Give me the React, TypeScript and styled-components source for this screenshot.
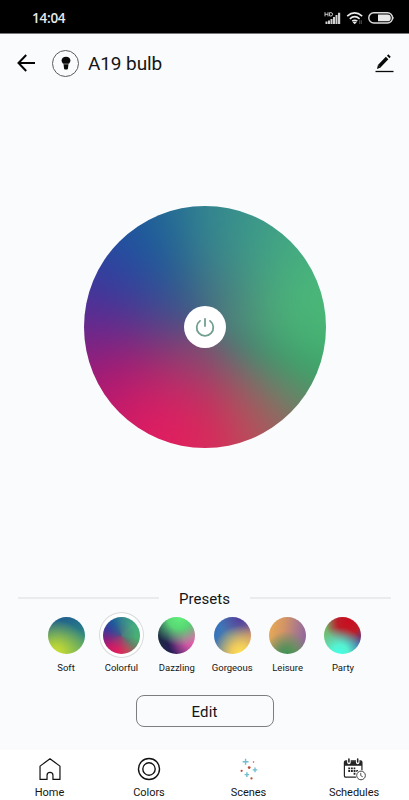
import React from 'react';
import styled, { createGlobalStyle } from 'styled-components';

const GlobalStyle = createGlobalStyle`
  * { box-sizing: border-box; }
  body { margin: 0; background: #f9fbfd; }
  svg { display: block; }
`;

const Screen = styled.div`
  display: flex;
  flex-direction: column;
  width: 409px;
  height: 800px;
  overflow: hidden;
  background: #f9fbfd;
  color: #151515;
  font-family: Roboto, sans-serif;
`;

const StatusBar = styled.div`
  display: flex;
  align-items: center;
  justify-content: space-between;
  height: 34px;
  padding: 2px 14px 0 32px;
  background: #000;
  border-bottom: 1px solid #77777a;
`;

const Clock = styled.span`
  font-family: 'Open Sans', sans-serif;
  font-size: 13.5px;
  font-weight: 600;
  line-height: 18px;
  letter-spacing: -0.25px;
  color: #e9e9e9;
`;

const StatusIcons = styled.div`
  display: flex;
  align-items: center;
  gap: 4px;
`;

const Header = styled.header`
  display: flex;
  align-items: center;
  height: 58px;
  padding: 0 15px 0 17px;
`;

const IconButton = styled.button`
  padding: 0;
  border: 0;
  background: none;
  color: #080808;
`;

const DeviceIcon = styled.div`
  display: grid;
  place-items: center;
  width: 27px;
  height: 27px;
  margin: 0 9px 0 16px;
  border: 1px solid #5b5b5d;
  border-radius: 50%;
`;

const Title = styled.h1`
  flex: 1;
  margin: 2px 0 0;
  font-size: 19px;
  font-weight: 400;
  line-height: 24px;
  letter-spacing: -0.1px;
`;

const Stage = styled.main`
  display: flex;
  justify-content: center;
  height: 497px;
  padding-top: 114px;
`;

const ColorDisc = styled.div`
  position: relative;
  display: grid;
  place-items: center;
  isolation: isolate;
  overflow: hidden;
  width: 242px;
  height: 242px;
  border-radius: 50%;
  &::before {
    content: '';
    position: absolute;
    inset: -30px;
    z-index: -1;
    filter: blur(12px);
    background:
      radial-gradient(circle, rgba(80, 96, 124, 0.8) 0%, rgba(80, 96, 124, 0.55) 16%, rgba(80, 96, 124, 0.16) 34%, transparent 50%),
      conic-gradient(#33838f 0deg, #3c9889 25deg, #45ab80 50deg, #4ab878 75deg, #46b173 97deg,
        #3fa169 112deg, #658568 128deg, #966560 143deg, #b94c5b 158deg, #d2305b 173deg,
        #de215e 191deg, #dc1d62 208deg, #c71b69 226deg, #a71b74 244deg, #7d2384 261deg,
        #562e94 278deg, #3b3a9b 292deg, #284aa0 310deg, #1e5a9b 327deg, #276e94 345deg, #33838f 360deg);
  }
`;

const PowerButton = styled.button`
  display: grid;
  place-items: center;
  width: 42px;
  height: 42px;
  padding: 0;
  border: 0;
  border-radius: 50%;
  background: #fff;
`;

const PresetTitle = styled.div`
  display: flex;
  align-items: center;
  gap: 20px;
  height: 20px;
  padding: 0 18px;
  font-size: 15px;
  letter-spacing: 0.02px;
  line-height: 20px;
  &::before, &::after {
    content: '';
    flex: 1;
    height: 2px;
    margin-top: -2px;
    background: #eaebed;
  }
`;

const PresetList = styled.div`
  display: grid;
  grid-template-columns: repeat(6, 55.4px);
  justify-content: center;
  margin-top: 3px;
`;

const Preset = styled.div`
  display: flex;
  flex-direction: column;
  align-items: center;
  font-size: 9.5px;
  line-height: 12px;
  letter-spacing: -0.02px;
`;

const Ring = styled.div<{ $selected?: boolean }>`
  display: grid;
  place-items: center;
  width: 45px;
  height: 46px;
  margin-bottom: 4px;
  border: 1px solid ${p => (p.$selected ? '#d9dadd' : 'transparent')};
  border-radius: 50%;
  background: ${p => (p.$selected ? '#fff' : 'transparent')};
`;

const Swatch = styled.div<{ $fill: string }>`
  width: 37px;
  height: 37px;
  border-radius: 50%;
  background: ${p => p.$fill};
`;

const EditButton = styled.button`
  flex: none;
  align-self: center;
  width: 138px;
  height: 32px;
  margin-top: 21px;
  padding: 2px 0 0;
  border: 1px solid #7d7e80;
  border-radius: 8px;
  background: transparent;
  color: inherit;
  font: 400 15px/20px Roboto, sans-serif;
  letter-spacing: 0.1px;
`;

const TabBar = styled.nav`
  display: flex;
  justify-content: space-between;
  height: 50px;
  margin-top: auto;
  padding: 0 23px 0 22.5px;
  background: #fff;
`;

const Tab = styled.div<{ $width: number }>`
  display: flex;
  flex-direction: column;
  align-items: center;
  width: ${p => p.$width}px;
  padding-top: 7px;
  font-size: 11px;
  line-height: 14px;
  letter-spacing: -0.05px;
  svg { margin-bottom: 5px; }
`;

const SignalIcon = () => (
  <svg width="18" height="14" viewBox="0 0 18 14" fill="#d0d0d0">
    <path d="M1.500 13v-2.500h2V13zM4 13V9.600h2V13zM6.500 13V8h2v5zM9 13V6h2v7zM11.500 13V4h2v9zM14 13V1.800h2.200V13z" />
    <path d="M1 1.200v4.200M4 1.200v4.200M1 3.300h3M5.600 1.600v3.400h1.200q1.800 0 1.800-1.700T6.800 1.600z" fill="none" stroke="#d8d8d8" strokeWidth=".9" />
  </svg>
);

const WifiIcon = () => (
  <svg width="18" height="14" viewBox="0 0 18 14" fill="none" stroke="#ececec" strokeWidth="1.600">
    <path d="M1.200 5.100q7.300-6.300 15 0M3.800 7.800q4.900-4.200 9.800 0M6.200 10.200q2.600-2 5.100 0" />
    <path d="M6.700 11.300q2-1.400 4 0l-2 2z" fill="#ececec" stroke="none" />
    <path d="M13.700 9.200v3.800M15.300 9.200V13" stroke="#888" strokeWidth=".6" />
  </svg>
);

const BatteryIcon = () => (
  <svg width="27" height="12" viewBox="0 0 27 12">
    <rect x=".8" y=".8" width="23.700" height="10.200" rx="5" fill="#000" stroke="#ddd" strokeWidth="1.400" />
    <path d="M10 2.500h9.400a3.400 3.400 0 0 1 0 6.800H10z" fill="#e8e8e8" />
    <path d="M25.200 4.200q1.500 1.700 0 3.400z" fill="#ddd" />
  </svg>
);

const BackIcon = () => (
  <svg width="19" height="18" viewBox="0 0 19 18" fill="none" stroke="#050505" strokeWidth="2">
    <path d="M18 9H1.700M9.200 1 1.500 9l7.700 8" />
  </svg>
);

const BulbIcon = () => (
  <svg width="10" height="14" viewBox="0 0 10 14" fill="#080808">
    <path d="M5 .7c2.700 0 4.400 1.500 4.400 3.800 0 1.400-.7 2.500-1.800 3.300H2.400C1.300 7 .6 5.900.6 4.500.6 2.200 2.300.7 5 .7z" />
    <path d="M2.500 8.300h5L6.900 12.800 6.300 13.500H3.700L3.100 12.800z" />
  </svg>
);

const EditIcon = () => (
  <svg width="19" height="19" viewBox="0 0 19 19">
    <path d="m4.200 12.200 7.900-8.200M13.200 2.900l1.300-1.300" stroke="#080808" strokeWidth="3.500" />
    <path d="m2 15 .9-4 2.800 2.600z" fill="#080808" />
    <path d="M.5 17.500h18" stroke="#080808" strokeWidth="1.300" />
  </svg>
);

const PowerIcon = () => (
  <svg width="20" height="20" viewBox="0 0 20 20" fill="none" stroke="#72a08e" strokeWidth="1.800" strokeLinecap="round">
    <path d="M10 1.800v7.200M5 3.900a8.300 8.300 0 1 0 10 0" />
  </svg>
);

const HomeIcon = () => (
  <svg width="26" height="26" viewBox="0 0 26 26" fill="none" stroke="#111" strokeWidth="1.300" strokeLinejoin="round">
    <path d="M2.200 24.300V9.900L13 2l10.800 7.900v14.400h-7.600v-4.500a3.200 3.200 0 0 0-6.400 0v4.500z" />
  </svg>
);

const ColorsIcon = () => (
  <svg width="26" height="26" viewBox="0 0 26 26" fill="none" stroke="#111" strokeWidth="1.500">
    <circle cx="13" cy="13" r="11.400" />
    <circle cx="13" cy="13" r="6.700" />
  </svg>
);

const ScenesIcon = () => (
  <svg width="26" height="26" viewBox="0 0 26 26">
    <path d="M9.300 2v6.400M6.100 5.200h6.400M19.500 11.500v5M17 14h5M10.700 16.600v5M8.200 19.100h5" stroke="#70bdcf" strokeWidth="1.500" />
    <g fill="#b94a35">
      <circle cx="13.200" cy="11.500" r="1.500" />
      <circle cx="5" cy="15" r="1.200" />
      <circle cx="15.700" cy="23.200" r="1.200" />
      <circle cx="17.900" cy="5.500" r=".8" />
    </g>
  </svg>
);

const SchedulesIcon = () => (
  <svg width="26" height="26" viewBox="0 0 26 26">
    <path d="M4.100 4.300h16q1.500 0 1.500 1.500v14.500q0 1.500-1.500 1.500h-16q-1.500 0-1.500-1.500V5.800q0-1.500 1.500-1.500z" fill="#fff" stroke="#242424" strokeWidth="1.300" />
    <path d="M2.600 4.500h19v5h-19z" fill="#242424" />
    <path d="M7.500 2v4M17 2v4" stroke="#fff" strokeWidth="3.800" strokeLinecap="round" />
    <path d="M7.500 2.300v3.200M17 2.300v3.200" stroke="#242424" strokeWidth="1.700" strokeLinecap="round" />
    <path d="M6.800 12.300h7.600M6.800 15.200h10.500M12.600 18.100h2" stroke="#242424" strokeWidth="2" strokeDasharray="2 .9" />
    <circle cx="20.600" cy="20" r="5.900" fill="#fff" />
    <circle cx="20.600" cy="20" r="4.700" fill="#fff" stroke="#333" strokeWidth="1" />
    <path d="M20.300 17.200v3l2.200 1.300" fill="none" stroke="#333" strokeWidth=".9" />
  </svg>
);

const presets = [
  { name: 'Soft', fill: 'radial-gradient(circle at 22% 100%, #cfe035 0%, #b0d03c 20%, transparent 72%), linear-gradient(165deg, #21628c 12%, #277987 42%, #51a869 90%)' },
  { name: 'Colorful', fill: 'radial-gradient(circle, #506080b0, transparent 55%), conic-gradient(#33838f, #45ab80 50deg, #46b173 97deg, #658568 128deg, #b94c5b 158deg, #de215e 191deg, #c71b69 226deg, #7d2384 261deg, #3b3a9b 292deg, #1e5a9b 327deg, #33838f)' },
  { name: 'Dazzling', fill: 'radial-gradient(circle at 58% 0%, #62ee7c 0%, #58d674 28%, transparent 68%), radial-gradient(circle at 100% 55%, #ef62b0 0%, #d058a4 25%, transparent 66%), linear-gradient(80deg, #17303b 0%, #2c195d 40%, #802c83 100%)' },
  { name: 'Gorgeous', fill: 'radial-gradient(circle at 72% 98%, #ffe052 0%, #edca5b 20%, transparent 62%), radial-gradient(circle at 72% 0%, #50379c 0%, transparent 48%), linear-gradient(110deg, #3372bd 10%, #577ea6 48%, #c97870 90%)' },
  { name: 'Leisure', fill: 'radial-gradient(circle at 48% 102%, #3c9456 0%, #60905c 20%, transparent 56%), linear-gradient(100deg, #e6aa55 5%, #d39466 38%, #a37491 75%, #8960a0 100%)' },
  { name: 'Party', fill: 'radial-gradient(circle at 42% 98%, #45ffe6 0%, #55f1d0 20%, transparent 62%), radial-gradient(circle at 68% 12%, #c90d20 0%, #bd1c28 28%, transparent 58%), linear-gradient(90deg, #70bd68 0%, #84926a 35%, #485c9a 68%, #4b3f9b 100%)' },
];

const tabs = [
  { name: 'Home', width: 54, icon: <HomeIcon /> },
  { name: 'Colors', width: 52, icon: <ColorsIcon /> },
  { name: 'Scenes', width: 54, icon: <ScenesIcon /> },
  { name: 'Schedules', width: 64, icon: <SchedulesIcon /> },
];

export default function App() {
  return (
    <Screen>
      <GlobalStyle />
      <StatusBar>
        <Clock>14:04</Clock>
        <StatusIcons>
          <SignalIcon />
          <WifiIcon />
          <BatteryIcon />
        </StatusIcons>
      </StatusBar>
      <Header>
        <IconButton aria-label="Back"><BackIcon /></IconButton>
        <DeviceIcon><BulbIcon /></DeviceIcon>
        <Title>A19 bulb</Title>
        <IconButton aria-label="Rename"><EditIcon /></IconButton>
      </Header>
      <Stage>
        <ColorDisc>
          <PowerButton aria-label="Power"><PowerIcon /></PowerButton>
        </ColorDisc>
      </Stage>
      <PresetTitle>Presets</PresetTitle>
      <PresetList>
        {presets.map(preset => (
          <Preset key={preset.name}>
            <Ring $selected={preset.name === 'Colorful'}><Swatch $fill={preset.fill} /></Ring>
            {preset.name}
          </Preset>
        ))}
      </PresetList>
      <EditButton>Edit</EditButton>
      <TabBar>
        {tabs.map(tab => (
          <Tab key={tab.name} $width={tab.width}>{tab.icon}{tab.name}</Tab>
        ))}
      </TabBar>
    </Screen>
  );
}
